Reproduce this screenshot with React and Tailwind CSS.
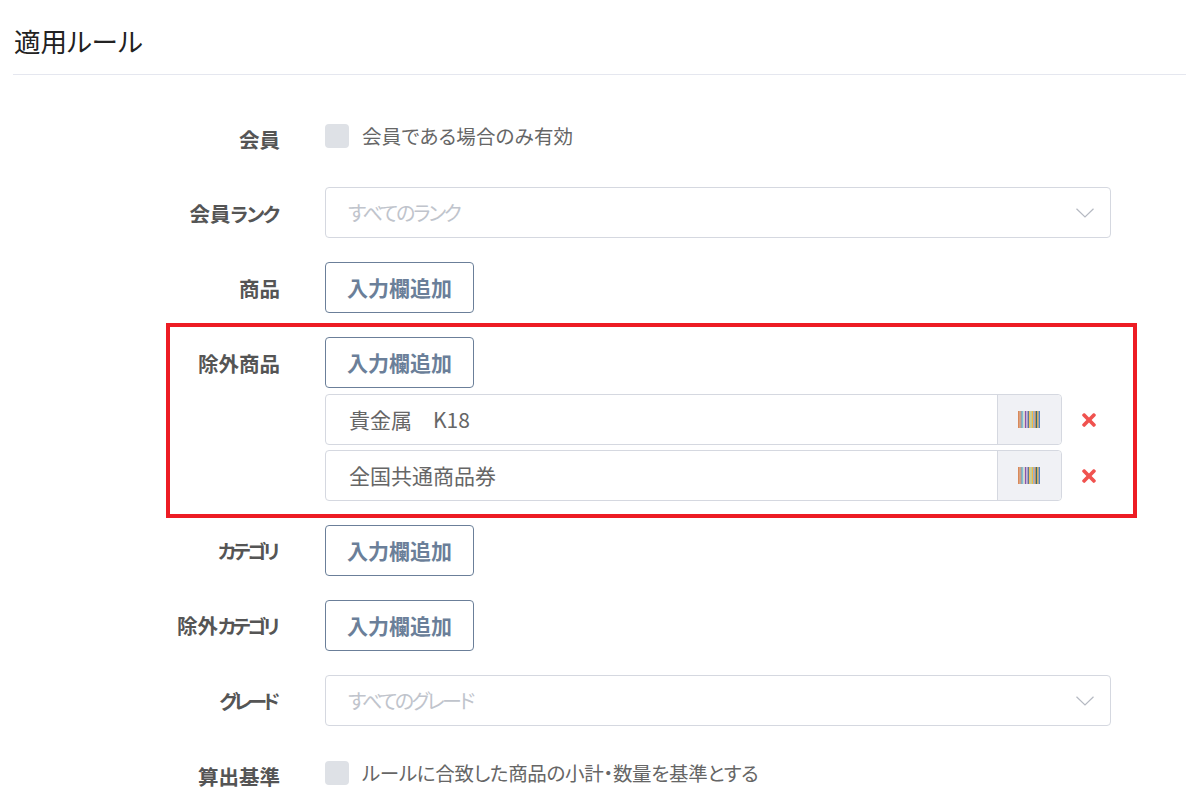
import { FaTimes } from "react-icons/fa";

const barColors = [
  "#d8895a", "#d8895a", "#8fa3b8", "#6fc0d0", "#eadfca", "#8455a8", "#c4a8dc", "#5f7595", "#f0c060",
  "#a0c898", "#f5b840", "#80aad8", "#d08850", "#2f6f70", "#d8a040", "#4f80c8",
];

const Barcode = () => (
  <svg width="22" height="17" viewBox="0 0 22 17" aria-hidden="true">
    {barColors.map((color, i) => (
      <rect key={i} x={(i * 22) / 16} y="0" width={22 / 16} height="17" fill={color} />
    ))}
  </svg>
);

const Chevron = () => (
  <svg width="18" height="10" viewBox="0 0 18 10" fill="none" stroke="#b5b9c2" strokeWidth="1.2" aria-hidden="true">
    <path d="M0.5 0.8 L9 9 L17.5 0.8" />
  </svg>
);

const Row = ({ label, className = "mb-[24px]", labelClass = "pt-[10px]", children }) => (
  <div className={`flex ${className}`}>
    <label className={`w-[267px] shrink-0 text-right text-[20.5px] leading-[30px] font-bold text-[#555555] ${labelClass}`}>
      {label}
    </label>
    <div className="ml-[45px] w-[786px]">{children}</div>
  </div>
);

const AddButton = () => (
  <button className="h-[51px] w-[149px] rounded border border-[#6b7f99] bg-white text-[21px] font-bold text-[#6b7f99]">
    入力欄追加
  </button>
);

const Select = ({ placeholder, textClass }) => (
  <div className="flex h-[51px] items-center justify-between rounded border border-[#d5d8e0] pl-[22px] pr-[16px]">
    <span className={`text-[20px] text-[#c0c4cc] ${textClass}`}>{placeholder}</span>
    <Chevron />
  </div>
);

const Checkbox = ({ text, textClass }) => (
  <div className="flex items-center">
    <span className="h-[24px] w-[24px] rounded bg-[#dee1e6]" />
    <span className={`ml-[13px] text-[19.5px] leading-[24px] text-[#666666] ${textClass}`}>{text}</span>
  </div>
);

const ProductInput = ({ value }) => (
  <div className="flex items-center">
    <div className="flex h-[51px] w-[737px] rounded border border-[#d5d8e0]">
      <div className="flex flex-1 items-center whitespace-pre pl-[23px] text-[21px] text-[#666666]">{value}</div>
      <div className="flex w-[64px] items-center justify-center rounded-r border-l border-[#d5d8e0] bg-[#f0f1f5] pr-[2px]">
        <Barcode />
      </div>
    </div>
    <FaTimes className="ml-[17px] text-[#f0524f]" size={20} />
  </div>
);

export default function App() {
  return (
    <div className="relative h-[802px] overflow-hidden bg-white pl-[13px] font-['Noto_Sans_CJK_JP',sans-serif] [font-feature-settings:'palt']">
      <h2 className="h-[75px] border-b border-[#e5e7ef] pt-[19px] pl-px text-[26.5px] leading-[44px] text-[#222222]">
        適用ルール
      </h2>

      <div className="pt-[49px]">
        <Row label="会員" className="mb-[33px]" labelClass="pt-0">
          <Checkbox text="会員である場合のみ有効" textClass="tracking-[0.2px]" />
        </Row>
        <Row
          label={<>会員<span className="mr-[1.8px] text-[19.5px] tracking-[-1.8px]">ランク</span></>}
          labelClass="pt-[11px]"
        >
          <Select placeholder="すべてのランク" textClass="tracking-[-2.2px]" />
        </Row>
        <Row label="商品" labelClass="pt-[11px]">
          <AddButton />
        </Row>
        <Row label="除外商品" labelClass="pt-[11px]">
          <AddButton />
          <div className="mt-[6px] flex flex-col gap-[5px]">
            <ProductInput value="貴金属　K18" />
            <ProductInput value="全国共通商品券" />
          </div>
        </Row>
        <Row label={<span className="mr-[3.4px] text-[19.5px] tracking-[-3.4px]">カテゴリ</span>}>
          <AddButton />
        </Row>
        <Row label={<>除外<span className="mr-[3.4px] text-[19.5px] tracking-[-3.4px]">カテゴリ</span></>}>
          <AddButton />
        </Row>
        <Row label={<span className="mr-[4px] text-[19.5px] tracking-[-4px]">グレード</span>} className="mb-[35px]">
          <Select placeholder="すべてのグレード" textClass="tracking-[-2.6px]" />
        </Row>
        <Row label="算出基準" labelClass="pt-0">
          <Checkbox text="ルールに合致した商品の小計・数量を基準とする" textClass="tracking-[-0.3px]" />
        </Row>
      </div>

      {/* red annotation frame */}
      <div className="absolute top-[323px] left-[166px] h-[195px] w-[971px] border-[4px] border-[#ed1c24]" />
    </div>
  );
}
